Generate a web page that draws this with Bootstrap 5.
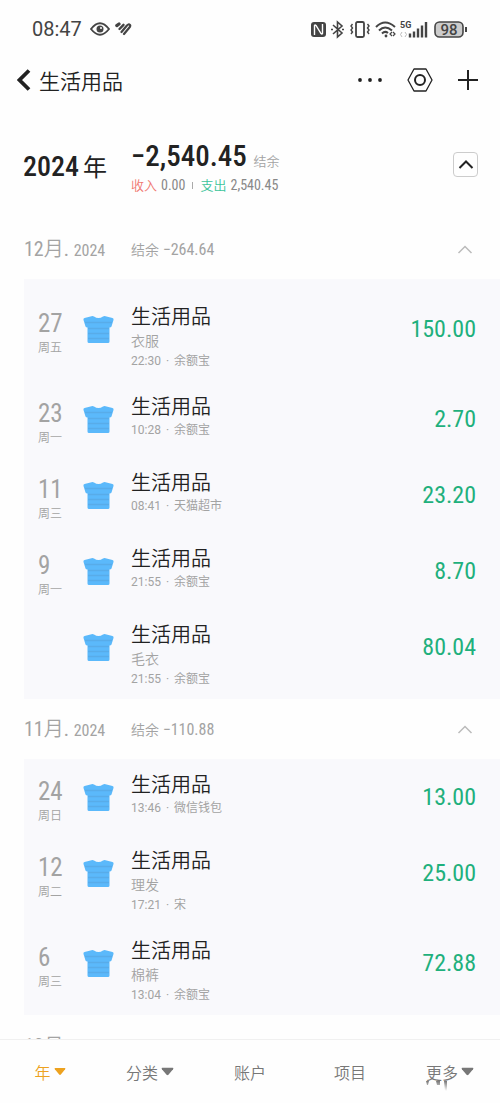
<!DOCTYPE html>
<html lang="zh-CN">
<head>
<meta charset="utf-8">
<meta name="viewport" content="width=device-width, initial-scale=1">
<title>生活用品</title>
<link href="https://cdn.jsdelivr.net/npm/bootstrap@5.3.0/dist/css/bootstrap.min.css" rel="stylesheet">
<style>
  :root { --ink: #222; --muted: #a3a3a3; --green: #1fb07c; --panel: #f9f9fc; }
  body { font-family: "Noto Sans CJK SC", sans-serif; font-weight: 350; color: var(--ink); background: #fefefe; }
  button { font-weight: inherit; }
  .din { font-family: "Roboto Condensed", Roboto, "Noto Sans CJK SC", sans-serif; font-weight: 400; }
  .cjk { font-family: "Noto Sans CJK SC", sans-serif; font-weight: 350; }
  .plain { background: none; border: 0; padding: 0; color: inherit; display: flex; align-items: center; }
  .status { height: 56px; padding: 2px 31px 0 32px; color: #444; }
  .clock { font: 400 20px/24px Roboto, sans-serif; }
  .topbar { height: 48px; padding: 0 21px 0 17px; }
  .topbar h1 { font-size: 21px; line-height: 28px; font-weight: 350; }
  .year { height: 115px; padding: 6px 22px 0 23px; }
  .year-name { width: 108px; padding-top: 4px; font-size: 28px; line-height: 36px; font-weight: 500; }
  .year-name span { font-size: 24px; font-weight: 400; }
  .total { font-size: 29px; line-height: 32px; font-weight: 500; }
  .tag { font-size: 13px; color: var(--muted); }
  .split { font-size: 14px; line-height: 16px; color: #888; }
  .split span { font-size: 13px; }
  .split i { width: 1px; height: 7px; margin: 0 3px; background: #aaa; }
  .toggle { width: 25px; height: 25px; border: 1px solid #ccc; border-radius: 4px; justify-content: center; }
  .month { height: 60px; padding: 0 27px 0 24px; color: var(--muted); }
  .month-name { width: 107px; font-size: 20px; line-height: 24px; }
  .month-name small { font-size: 16px; }
  .month-sum { font-size: 16px; line-height: 24px; }
  .month-sum span { font-size: 14px; }
  .month .plain { color: #bbb; }
  .days { margin-left: 24px; background: var(--panel); }
  .first-days { padding-top: 12px; }
  .entry { min-height: 76px; padding: 0 24px 0 14px; }
  .date { width: 45px; padding-top: 20px; color: var(--muted); }
  .date b { display: block; font-size: 25px; line-height: 26px; }
  .date span { display: block; font-size: 12px; line-height: 20px; }
  .shirt { width: 48px; padding-top: 24px; }
  .info { padding: 11px 0 9px; }
  .info h2 { font-size: 20px; line-height: 28px; font-weight: 350; margin: 0; }
  .info p { margin: 0; line-height: 21px; color: var(--muted); font-size: 14px; }
  .info .when { font: 400 12px/21px Roboto, "Noto Sans CJK SC", sans-serif; gap: 5px; }
  .amount { font-size: 24px; line-height: 76px; color: var(--green); }
  .tabs { height: 64px; border-top: 1px solid #f0f0f0; background: #fefefe; color: #777; }
  .tabs button { font-size: 16px; line-height: 24px; gap: 3px; }
  .tabs .chosen { color: #eda21f; }
  .smudge { right: 25px; bottom: 4px; }
</style>
</head>
<body>
<svg class="d-none">
  <symbol id="tee" viewBox="0 0 31 29">
    <path d="M7.500 1.500Q9.500 .5 11 1.500Q15.500 4.500 20 1.500Q21.500 .5 23.500 1.500L29.500 3Q31 3.500 30.500 5L28.500 11.500Q28 12.500 26.500 12.500V26.500Q26.500 28 25 28H6Q4.500 28 4.500 26.500V12.500Q3 12.500 2.500 11.500L.5 5Q0 3.500 1.500 3Z" fill="#5bb9fb"/>
    <path d="M2 7.500H29M5 13.500H26M5 18.500H26M5 23.500H26" stroke="#58ace9" stroke-width="1.600"/>
  </symbol>
  <symbol id="up" viewBox="0 0 16 9"><path d="M1.500 8 8 1.500 14.500 8" fill="none" stroke="currentColor"/></symbol>
  <symbol id="down" viewBox="0 0 14 9"><path d="M1.500 .5H12.500Q14 .5 13 2L8 8Q7 9 6 8L1 2Q0 .5 1.500 .5Z" fill="currentColor"/></symbol>
</svg>
<div class="vh-100 d-flex flex-column overflow-hidden">
  <div class="status flex-shrink-0 d-flex align-items-center justify-content-between">
    <div class="d-flex align-items-center">
      <span class="clock me-2">08:47</span>
      <svg class="me-1" width="20" height="14" viewBox="0 0 20 14"><path d="M1 7Q10-4.500 19 7Q10 18.500 1 7Z" fill="none" stroke="currentColor" stroke-width="1.800"/><circle cx="10" cy="7" r="3.500" fill="currentColor"/><circle cx="11" cy="6" r="1" fill="#fff"/></svg>
      <svg width="18" height="14" viewBox="0 0 18 14"><g fill="none" stroke="currentColor" stroke-linecap="round"><path d="M2.800 3.600 5 2" stroke-width="3.200"/><path d="M5.500 7 9.500 2.800" stroke-width="2.400"/><path d="M7.500 10 12.500 4Q14.500 1.500 16 3Q16.800 4 15 6L10 12" stroke-width="2.200"/></g></svg>
    </div>
    <svg width="160" height="20" viewBox="0 0 160 20" fill="none" stroke="currentColor">
      <rect x="2" y="3" width="15" height="15" rx="3" fill="currentColor" stroke="none"/>
      <path d="M5.500 16V6.500Q6 5.500 7 6.500L12 14.500Q13 15.500 13.500 14.500V5" stroke="#fff" stroke-width="1.400"/>
      <path d="M24 6 33 14 28.500 18V3L33 7 24 15M22 10.500H24M33 10.500H35" stroke-width="1.600"/>
      <rect x="47" y="3" width="8" height="15" rx="1.500" stroke-width="1.800"/>
      <path d="M43.500 5 42 7 43.500 9 42 11 43.500 13 42 15M58.500 5 60 7 58.500 9 60 11 58.500 13 60 15" stroke-width="1.400"/>
      <path d="M67 8Q76-1 86 8M70 11.500Q76 5.500 83 11.500M73 14.500Q76 11.500 79 14" stroke-width="2"/>
      <circle cx="77" cy="17" r="1.400" fill="currentColor" stroke="none"/>
      <path d="M83 13 81 15 83 17M84 13 86 15 84 17" stroke-width="1.200"/>
      <text x="91" y="9" font-family="Roboto, sans-serif" font-size="9" font-weight="700" fill="currentColor" stroke="none">5G</text>
      <path d="M93 13 91.500 15.500 93 18M96 13 97.500 15.500 96 18" stroke="#bbb"/>
      <path d="M101 18.500V14.500M105 18.500V12.500M109 18.500V9.500M113 18.500V6.500M117 18.500V3" stroke-width="2.400"/>
      <rect x="126" y="3" width="28" height="15" rx="4.500" fill="#ccc" stroke-width="1.600"/>
      <path d="M157 8V13" stroke-width="2"/>
      <text x="140" y="15.500" text-anchor="middle" font-family="Roboto, sans-serif" font-size="15" font-weight="500" fill="currentColor" stroke="none">98</text>
    </svg>
  </div>
  <header class="topbar flex-shrink-0 d-flex align-items-center justify-content-between">
    <div class="d-flex align-items-center">
      <button class="plain" aria-label="返回"><svg width="14" height="22" viewBox="0 0 14 22"><path d="M12 1.500 2.500 11 12 20.500" fill="none" stroke="#222" stroke-width="3.800"/></svg></button>
      <h1 class="mb-0 ms-2">生活用品</h1>
    </div>
    <div class="d-flex align-items-center gap-4">
      <button class="plain" aria-label="更多操作"><svg width="26" height="6" viewBox="0 0 26 6" fill="#222"><circle cx="3" cy="3" r="1.900"/><circle cx="13" cy="3" r="1.900"/><circle cx="23" cy="3" r="1.900"/></svg></button>
      <button class="plain" aria-label="设置"><svg width="26" height="24" viewBox="0 0 26 24" fill="none" stroke="#222"><path d="M7 1H19L25 12 19 23H7L1 12Z" stroke-width="1.300" stroke-linejoin="round"/><circle cx="13" cy="12" r="5" stroke-width="2"/></svg></button>
      <button class="plain" aria-label="添加"><svg width="22" height="22" viewBox="0 0 22 22"><path d="M11 1V21M1 11H21" stroke="#222" stroke-width="2"/></svg></button>
    </div>
  </header>
  <main class="flex-fill overflow-hidden">
    <section class="year d-flex align-items-center">
      <div class="year-name din">2024<span class="cjk ms-1">年</span></div>
      <div class="flex-fill pt-1">
        <div class="total din">−2,540.45 <span class="tag cjk">结余</span></div>
        <div class="split din d-flex align-items-center gap-1"><span class="cjk" style="color:#f0776f">收入</span>0.00<i></i><span class="cjk" style="color:#3cc49b">支出</span>2,540.45</div>
      </div>
      <button class="plain toggle" aria-label="收起全年"><svg width="16" height="9" stroke-width="2"><use href="#up"/></svg></button>
    </section>
    <div id="list"></div>
  </main>
  <nav class="tabs position-relative flex-shrink-0 d-flex align-items-center">
    <button class="plain chosen w-100 justify-content-center">年<svg width="12" height="9"><use href="#down"/></svg></button>
    <button class="plain w-100 justify-content-center">分类<svg width="13" height="9"><use href="#down"/></svg></button>
    <button class="plain w-100 justify-content-center">账户</button>
    <button class="plain w-100 justify-content-center">项目</button>
    <button class="plain w-100 justify-content-center">更多<svg width="13" height="9"><use href="#down"/></svg></button>
    <svg class="smudge position-absolute" width="50" height="19" viewBox="0 0 50 19">
      <defs><linearGradient id="fade" x2="0" y2="1"><stop stop-color="#777"/><stop offset="1" stop-color="#fff"/></linearGradient></defs>
      <path d="M1 1H4L3 5H2ZM11 1H15V5H12ZM19 1H22V11H20Z" fill="url(#fade)"/>
    </svg>
  </nav>
</div>
<script src="https://cdn.jsdelivr.net/npm/bootstrap@5.3.0/dist/js/bootstrap.bundle.min.js"></script>
<script>
  // day, weekday, note, time, account, amount
  const months = [
    { m: '12', sum: '−264.64', rows: [
      ['27', '周五', '衣服', '22:30', '余额宝', '150.00'],
      ['23', '周一', '', '10:28', '余额宝', '2.70'],
      ['11', '周三', '', '08:41', '天猫超市', '23.20'],
      ['9', '周一', '', '21:55', '余额宝', '8.70'],
      ['', '', '毛衣', '21:55', '余额宝', '80.04']] },
    { m: '11', sum: '−110.88', rows: [
      ['24', '周日', '', '13:46', '微信钱包', '13.00'],
      ['12', '周二', '理发', '17:21', '宋', '25.00'],
      ['6', '周三', '棉裤', '13:04', '余额宝', '72.88']] },
    { m: '10', sum: '', rows: [] }
  ];
  document.getElementById('list').innerHTML = months.map((g, i) => `
    <section>
      <div class="month d-flex align-items-center">
        <div class="month-name din">${g.m}<span class="cjk">月</span>. ${g.sum && '<small>2024</small>'}</div>
        <div class="month-sum din flex-fill">${g.sum && `<span class="cjk">结余</span> ${g.sum}`}</div>
        <button class="plain" aria-label="收起${g.m}月"><svg width="16" height="9" stroke-width="1.500"><use href="#up"/></svg></button>
      </div>
      <div class="days ${i ? '' : 'first-days'}">${g.rows.map(r => `
        <article class="entry d-flex align-items-start">
          <div class="date">${r[0] && `<b class="din">${r[0]}</b><span>${r[1]}</span>`}</div>
          <div class="shirt"><svg width="31" height="29"><use href="#tee"/></svg></div>
          <div class="info flex-fill"><h2>生活用品</h2>${r[2] && `<p>${r[2]}</p>`}<p class="when d-flex"><span>${r[3]}</span><span>·</span><span>${r[4]}</span></p></div>
          <div class="amount din">${r[5]}</div>
        </article>`).join('')}</div>
    </section>`).join('');
</script>
</body>
</html>
